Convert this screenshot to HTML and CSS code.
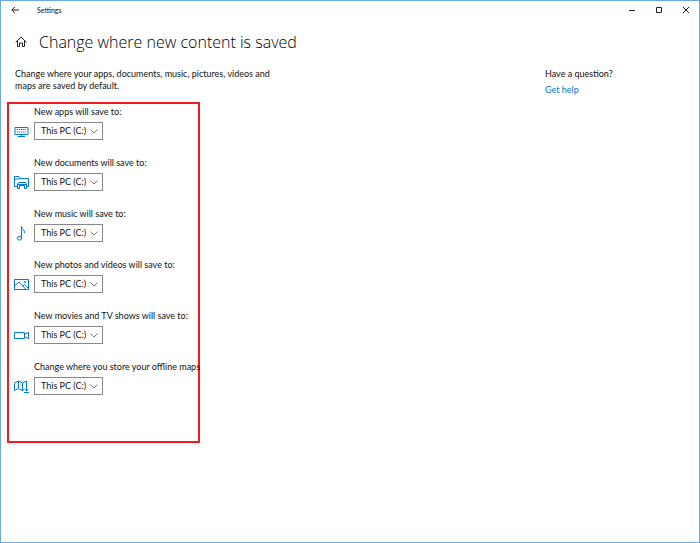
FILE: index.html
```html
<!doctype html>
<html lang="en">
<head>
    <meta charset="utf-8" />
    <meta name="viewport" content="width=device-width, initial-scale=1" />
    <title>Settings</title>
    <link rel="stylesheet" href="styles.css">
</head>
<body>
    <div class="window">
        <!-- Title bar -->
        <header class="titlebar">
            <button class="title-button" aria-label="Back">
                <svg width="8" height="8" viewBox="0 0 8 8"><path d="M8 4H.8M4 .8L.8 4L4 7.200" /></svg>
            </button>
            <span class="app-name">Settings</span>
            <div class="window-controls">
                <button class="title-button" aria-label="Minimize">
                    <svg width="6" height="6" viewBox="0 0 6 6"><path d="M0 3.500H6" /></svg>
                </button>
                <button class="title-button" aria-label="Maximize">
                    <svg width="6" height="6" viewBox="0 0 6 6"><path d="M.5 .5H5.500V5.500H.5Z" /></svg>
                </button>
                <button class="title-button" aria-label="Close">
                    <svg width="6" height="6" viewBox="0 0 6 6"><path d="M0 0L6 6M6 0L0 6" /></svg>
                </button>
            </div>
        </header>

        <div class="page-title">
            <a href="#" class="home" aria-label="Home">
                <svg width="12" height="12" viewBox="0 0 12 12"><path d="M.7 6.300L6 1L11.300 6.300M2.500 5V10.500H4.500V7H7.500V10.500H9.500V5" /></svg>
            </a>
            <h1>Change where new content is saved</h1>
        </div>

        <div class="content">
            <main>
                <p class="intro">Change where your apps, documents, music, pictures, videos and maps are saved by default.</p>

                <!-- Save locations -->
                <form class="locations">
                    <div class="location">
                        <label for="apps">New apps will save to:</label>
                        <svg class="icon" viewBox="0 0 15 15">
                            <path d="M1 3.500H14V10.500H1ZM7.500 10.500V12.500M4 12.500H11" />
                            <path d="M3 5.500H12M3 8H12" stroke-dasharray="1.200 .7" />
                        </svg>
                        <div class="dropdown">
                            <select id="apps"><option>This PC (C:)</option></select>
                            <svg class="chevron" viewBox="0 0 8 5"><path d="M.5 .5L4 4L7.500 .5" /></svg>
                        </div>
                    </div>
                    <div class="location">
                        <label for="documents">New documents will save to:</label>
                        <svg class="icon" viewBox="0 0 15 15">
                            <path d="M3.500 11.500H.5V1.500H5L6.500 3.500H14.500V11.500H12.500M.5 4H5L6.500 3.500" />
                            <path d="M3.500 13.500V9L4.500 7.500H11.500L12.500 9V13.500H10.500V10.500H5.500V13.500ZM3.500 9.500H12.500" />
                        </svg>
                        <div class="dropdown">
                            <select id="documents"><option>This PC (C:)</option></select>
                            <svg class="chevron" viewBox="0 0 8 5"><path d="M.5 .5L4 4L7.500 .5" /></svg>
                        </div>
                    </div>
                    <div class="location">
                        <label for="music">New music will save to:</label>
                        <svg class="icon" viewBox="0 0 15 15">
                            <ellipse cx="5.500" cy="12.300" rx="2.200" ry="1.800" />
                            <path d="M7.500 12.500V.5C7.500 3.500 11 3.700 10.500 7" />
                        </svg>
                        <div class="dropdown">
                            <select id="music"><option>This PC (C:)</option></select>
                            <svg class="chevron" viewBox="0 0 8 5"><path d="M.5 .5L4 4L7.500 .5" /></svg>
                        </div>
                    </div>
                    <div class="location">
                        <label for="photos">New photos and videos will save to:</label>
                        <svg class="icon" viewBox="0 0 15 15">
                            <path d="M.5 2.500H14.500V12.500H.5ZM.5 9L5 5L12 12.500M8.500 9L10.500 7.500L14.500 11.500" />
                            <circle cx="11" cy="5" r=".6" />
                        </svg>
                        <div class="dropdown">
                            <select id="photos"><option>This PC (C:)</option></select>
                            <svg class="chevron" viewBox="0 0 8 5"><path d="M.5 .5L4 4L7.500 .5" /></svg>
                        </div>
                    </div>
                    <div class="location">
                        <label for="movies">New movies and TV shows will save to:</label>
                        <svg class="icon" viewBox="0 0 15 15">
                            <path d="M.5 4.500H10.500V10.500H.5ZM10.500 6.500L14.500 4.500V10.500L10.500 8.500" />
                        </svg>
                        <div class="dropdown">
                            <select id="movies"><option>This PC (C:)</option></select>
                            <svg class="chevron" viewBox="0 0 8 5"><path d="M.5 .5L4 4L7.500 .5" /></svg>
                        </div>
                    </div>
                    <div class="location">
                        <label for="maps">Change where you store your offline maps</label>
                        <svg class="icon" viewBox="0 0 15 15">
                            <path d="M10 10.500L8.500 11.500L4.500 9.500L.5 11.500V4L4.500 2L8.500 4L12.500 2V7M4.500 2V9.500M8.500 4V11.500" />
                            <path d="M12.500 7V12M10.300 10L12.500 12L14.500 10M10 13.500H15" />
                        </svg>
                        <div class="dropdown">
                            <select id="maps"><option>This PC (C:)</option></select>
                            <svg class="chevron" viewBox="0 0 8 5"><path d="M.5 .5L4 4L7.500 .5" /></svg>
                        </div>
                    </div>
                </form>
            </main>

            <aside class="help">
                <p>Have a question?</p>
                <a href="#">Get help</a>
            </aside>
        </div>
    </div>
</body>
</html>
```
FILE: styles.css
```css
* {
    box-sizing: border-box;
}
body {
    margin: 0;
    font-family: Lato, "Open Sans", sans-serif;
    font-size: 9px;
    line-height: 12px;
    color: #111;
    background: white;
}
h1, p {
    margin: 0;
}
svg {
    display: block;
    fill: none;
    stroke: currentColor;
}
.window {
    min-height: 100vh;
    border: 1px solid #69a9df;
}

/* Title bar */
.titlebar {
    display: flex;
    align-items: center;
    height: 17px;
}
.title-button {
    display: flex;
    align-items: center;
    justify-content: center;
    width: 27px;
    height: 17px;
    padding: 0;
    border: none;
    background: none;
    color: #222;
}
.app-name {
    margin-left: 9px;
    font-size: 7px;
}
.window-controls {
    display: flex;
    margin-left: auto;
}

/* Heading */
.page-title {
    display: flex;
    align-items: center;
    gap: 12px;
    margin-top: 12px;
    padding-left: 14px;
}
.home {
    color: #222;
}
.page-title h1 {
    font-family: "Open Sans", sans-serif;
    font-size: 16px;
    font-weight: 300;
    line-height: 24px;
    color: #000;
}

/* Body */
.content {
    display: flex;
    justify-content: space-between;
    margin-top: 14px;
}
.intro {
    width: 280px;
    padding-left: 14px;
}
.locations {
    display: flex;
    flex-direction: column;
    gap: 17px;
    width: 193px;
    margin: 10px 0 0 6px;
    padding: 2px 0 46px 5px;
    border: 2px solid #f6191e;
}
.location {
    display: grid;
    grid-template-columns: 15px 1fr;
    column-gap: 5px;
    row-gap: 4px;
    align-items: center;
}
.location label {
    grid-column: 2;
    white-space: nowrap;
}
.icon {
    width: 15px;
    height: 15px;
    color: #0078d7;
}
.dropdown {
    display: grid;
    align-items: center;
    width: 69px;
    height: 18px;
}
.dropdown select,
.dropdown .chevron {
    grid-area: 1 / 1;
}
.dropdown select {
    appearance: none;
    width: 100%;
    height: 18px;
    padding: 0 6px;
    border: 1px solid #888;
    border-radius: 0;
    background: white;
    color: inherit;
    font: inherit;
}
.chevron {
    justify-self: end;
    width: 8px;
    height: 5px;
    margin-right: 5px;
    color: #777;
    pointer-events: none;
}

/* Help */
.help {
    width: 154px;
}
.help a {
    display: inline-block;
    margin-top: 4px;
    color: #0078d7;
    text-decoration: none;
}
```
